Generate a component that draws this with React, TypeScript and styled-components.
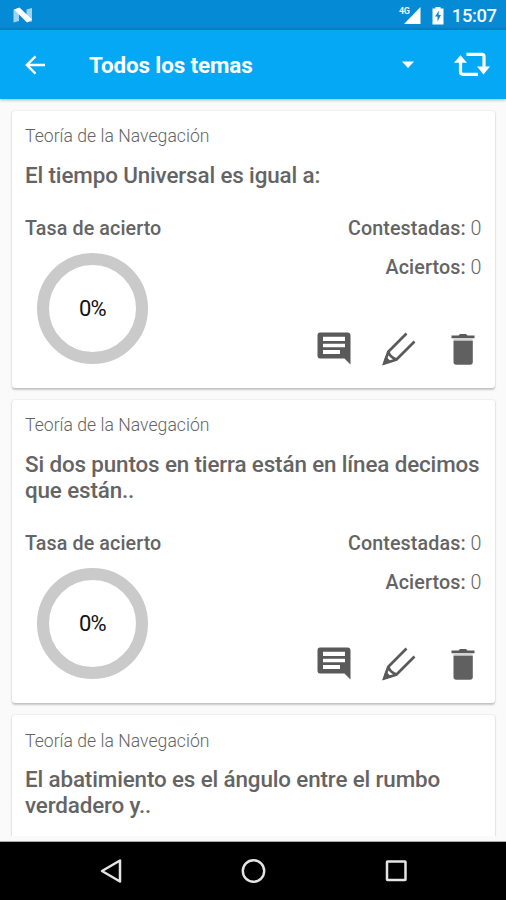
import React from "react";
import styled, { createGlobalStyle } from "styled-components";

const GlobalStyle = createGlobalStyle`
  * { box-sizing: border-box; }
  body { margin: 0; background: #fafafa; overflow: hidden; }
`;

const Screen = styled.div`
  width: 506px;
  height: 900px;
  display: flex;
  flex-direction: column;
  overflow: hidden;
  background: #fafafa;
  font-family: Roboto, "Liberation Sans", sans-serif;
  color: #646464;
`;

const StatusBar = styled.header`
  height: 30px;
  flex: none;
  display: flex;
  align-items: flex-start;
  justify-content: space-between;
  padding: 0 9.5px 0 13px;
  background: linear-gradient(#058bd5 0 26px, #047fc3);
`;

const StatusIcons = styled.div`
  display: flex;
`;

const Clock = styled.span`
  margin-left: 7.5px;
  font-size: 18.4px;
  line-height: 32px;
  font-weight: 500;
  letter-spacing: -0.4px;
  color: #f4fbff;
`;

const AppBar = styled.nav`
  height: 69px;
  flex: none;
  display: flex;
  align-items: center;
  padding: 0 16px 0 25px;
  background: #04a8f4;
  box-shadow: 0 1px 3px rgba(0, 0, 0, 0.3);
  z-index: 1;
`;

const IconButton = styled.button`
  display: flex;
  padding: 0;
  border: 0;
  background: none;
`;

const TopicPicker = styled.div`
  flex: 1;
  display: flex;
  align-items: center;
  justify-content: space-between;
  margin: 0 40px 0 43px;
`;

const PickerLabel = styled.span`
  font-size: 22.4px;
  line-height: 26px;
  font-weight: 700;
  letter-spacing: -0.1px;
  padding-top: 1px;
  color: #fff;
`;

const CardList = styled.main`
  height: 737px;
  flex: none;
  display: flex;
  flex-direction: column;
  gap: 12.4px;
  padding: 11.6px 11.5px 0 12px;
  overflow: hidden;
`;

const ListEnd = styled.div`
  height: 6px;
  flex: none;
  border-bottom: 1px solid #aaa;
`;

const Card = styled.article`
  flex: none;
  padding: 14.4px 13px 24px;
  border-radius: 3px;
  background: #fff;
  box-shadow: 0 1.5px 2px rgba(0, 0, 0, 0.2), 0 0 2px rgba(0, 0, 0, 0.12);

  &:last-child {
    min-height: 303px;
  }
`;

const Topic = styled.p`
  margin: 0;
  font-size: 17.6px;
  line-height: 22px;
  font-weight: 300;
  letter-spacing: 0.02px;
  white-space: nowrap;
`;

const Question = styled.h2`
  margin: 14.6px -10px 0 0;
  font-size: 22.4px;
  line-height: 26px;
  font-weight: 500;
  letter-spacing: -0.13px;
`;

const Stats = styled.div`
  display: flex;
  justify-content: space-between;
  margin-top: 29px;
  height: 147px;
`;

const StatLabel = styled.strong`
  display: block;
  font-size: 19.7px;
  line-height: 24px;
  font-weight: 500;
  letter-spacing: 0.1px;
`;

const StatLine = styled.div`
  font-size: 19.7px;
  line-height: 24px;
  font-weight: 300;
  text-align: right;

  & + & {
    margin-top: 15px;
  }

  b {
    font-weight: 500;
    letter-spacing: 0.12px;
  }
`;

const Ring = styled.div`
  width: 111px;
  height: 111px;
  margin: 12.3px 0 0 12px;
  display: flex;
  align-items: center;
  justify-content: center;
  border: 12.5px solid #cacaca;
  border-radius: 50%;
  font-size: 22px;
  font-weight: 400;
  letter-spacing: -0.8px;
  color: #111;
`;

const Actions = styled.div`
  display: flex;
  justify-content: flex-end;
  gap: 30.5px;
  margin: 52px 1.5px 0 0;
`;

const NavBar = styled.footer`
  height: 58px;
  flex: none;
  display: flex;
  align-items: center;
  justify-content: center;
  gap: 118px;
  background: #000;
`;

const NougatIcon = () => (
  <svg width="20" height="30" viewBox="0 0 20 30">
    <path d="M0.500 10L6 8V21L0.500 22.500ZM19 8L13.500 9.500V22L19 21.500Z" fill="#a0d3f0" />
    <path d="M1 9.500L6.500 7.500L19 19.500L14 22.500Z" fill="#fff" />
  </svg>
);

const SignalIcon = () => (
  <svg width="24" height="30" viewBox="0 0 24 30">
    <path d="M6 24L22.500 7V24Z" fill="#fff" />
    <text x="1" y="14" fontSize="9" fontWeight="700" fill="#e5f5fd" letterSpacing="-0.5">4G</text>
  </svg>
);

const BatteryIcon = () => (
  <svg width="22" height="30" viewBox="-10 0 22 30">
    <path d="M3.500 7H8.500V8.500H11.500V24.500H0.500V8.500H3.500Z" fill="#fff" />
    <path d="M7 10.500L3 16.500H5.500V21.500L9 15H6.500Z" fill="#058bd5" />
  </svg>
);

const BackIcon = () => (
  <svg width="21" height="20" viewBox="0 0 21 20">
    <path d="M20 10H2M10.500 1.300L1.800 10L10.500 18.700" fill="none" stroke="#fff" strokeWidth="2.400" />
  </svg>
);

const CaretIcon = () => (
  <svg width="12" height="7" viewBox="0 0 12 7">
    <path d="M0 0.500H12L6 7Z" fill="#fff" />
  </svg>
);

const RepeatIcon = () => (
  <svg width="36" height="26" viewBox="0 0 36 26">
    <path d="M12.500 2.300H28Q30 2.300 30 4.500V15M24 22.300H9Q6.500 22.300 6.500 19.500V9" fill="none" stroke="#fff" strokeWidth="3.200" />
    <path d="M0 10.800L6.500 3.300L13 10.800ZM23 14.500H36L29.500 22.500Z" fill="#fff" />
  </svg>
);

const CommentIcon = () => (
  <svg width="34" height="34" viewBox="0 0 34 34">
    <path
      fillRule="evenodd"
      fill="#5a5a5a"
      d="M3 0.500H30.500Q33.500 0.500 33.500 3.500V32.500L27.500 26.500H3Q0.500 26.500 0.500 23.500V3.500Q0.500 0.500 3 0.500ZM6 4.700V9H28V4.700ZM6 11.700V15.300H28V11.700ZM6 18V22H23V18Z"
    />
  </svg>
);

const PencilIcon = () => (
  <svg width="34" height="34" viewBox="0 0 34 34">
    <path
      d="M24.500 1.500L6.300 19.700L2.300 31.500L14.500 27.500L32.500 9.500M6.300 19.700Q8 25.500 14.500 27.500"
      fill="none"
      stroke="#5a5a5a"
      strokeWidth="2.700"
    />
    <path d="M0.500 33L3.500 24L9.500 30Z" fill="#5a5a5a" />
  </svg>
);

const TrashIcon = () => (
  <svg width="34" height="34" viewBox="-5 0 34 34">
    <path d="M0.500 3.600H7.500L9 2H15L16.500 3.600H23.500V6.200H0.500Z" fill="#5a5a5a" />
    <path d="M2.500 6.200H21.500V9H2.500Z" fill="#d5d5d5" />
    <path d="M2.500 8.800H21.800V30Q21.800 32.800 19 32.800H5.300Q2.500 32.800 2.500 30Z" fill="#606060" />
  </svg>
);

const NavBack = () => (
  <svg width="24" height="26" viewBox="0 0 24 26">
    <path d="M22 2.500V23.500L4 13Z" fill="none" stroke="#e4e4e4" strokeWidth="2.500" strokeLinejoin="round" />
  </svg>
);

const NavHome = () => (
  <svg width="26" height="26" viewBox="0 0 26 26">
    <circle cx="13.500" cy="13" r="10.700" fill="none" stroke="#e4e4e4" strokeWidth="2.400" />
  </svg>
);

const NavRecent = () => (
  <svg width="24" height="26" viewBox="0 0 24 26">
    <rect x="3" y="3.500" width="18.500" height="18.500" rx="0.500" fill="none" stroke="#e4e4e4" strokeWidth="2.500" />
  </svg>
);

type QuestionData = { lines: string[]; showStats: boolean };

const questions: QuestionData[] = [
  { lines: ["El tiempo Universal es igual a:"], showStats: true },
  { lines: ["Si dos puntos en tierra están en línea decimos", "que están.."], showStats: true },
  { lines: ["El abatimiento es el ángulo entre el rumbo", "verdadero y.."], showStats: false },
];

const QuestionCard = ({ lines, showStats }: QuestionData) => (
  <Card>
    <Topic>Teoría de la Navegación</Topic>
    <Question>
      {lines.map((line, i) => (
        <React.Fragment key={line}>
          {i > 0 && <br />}
          {line}
        </React.Fragment>
      ))}
    </Question>
    {showStats && (
      <Stats>
        <div>
          <StatLabel>Tasa de acierto</StatLabel>
          <Ring>0%</Ring>
        </div>
        <div>
          <StatLine><b>Contestadas:</b> 0</StatLine>
          <StatLine><b>Aciertos:</b> 0</StatLine>
          <Actions>
            <IconButton aria-label="Comentar"><CommentIcon /></IconButton>
            <IconButton aria-label="Editar"><PencilIcon /></IconButton>
            <IconButton aria-label="Eliminar"><TrashIcon /></IconButton>
          </Actions>
        </div>
      </Stats>
    )}
  </Card>
);

export default function App() {
  return (
    <Screen>
      <GlobalStyle />
      <StatusBar>
        <NougatIcon />
        <StatusIcons>
          <SignalIcon />
          <BatteryIcon />
          <Clock>15:07</Clock>
        </StatusIcons>
      </StatusBar>
      <AppBar>
        <IconButton aria-label="Volver"><BackIcon /></IconButton>
        <TopicPicker>
          <PickerLabel>Todos los temas</PickerLabel>
          <CaretIcon />
        </TopicPicker>
        <IconButton aria-label="Repetir"><RepeatIcon /></IconButton>
      </AppBar>
      <CardList>
        {questions.map((question) => (
          <QuestionCard key={question.lines[0]} {...question} />
        ))}
      </CardList>
      <ListEnd />
      <NavBar>
        <NavBack />
        <NavHome />
        <NavRecent />
      </NavBar>
    </Screen>
  );
}
